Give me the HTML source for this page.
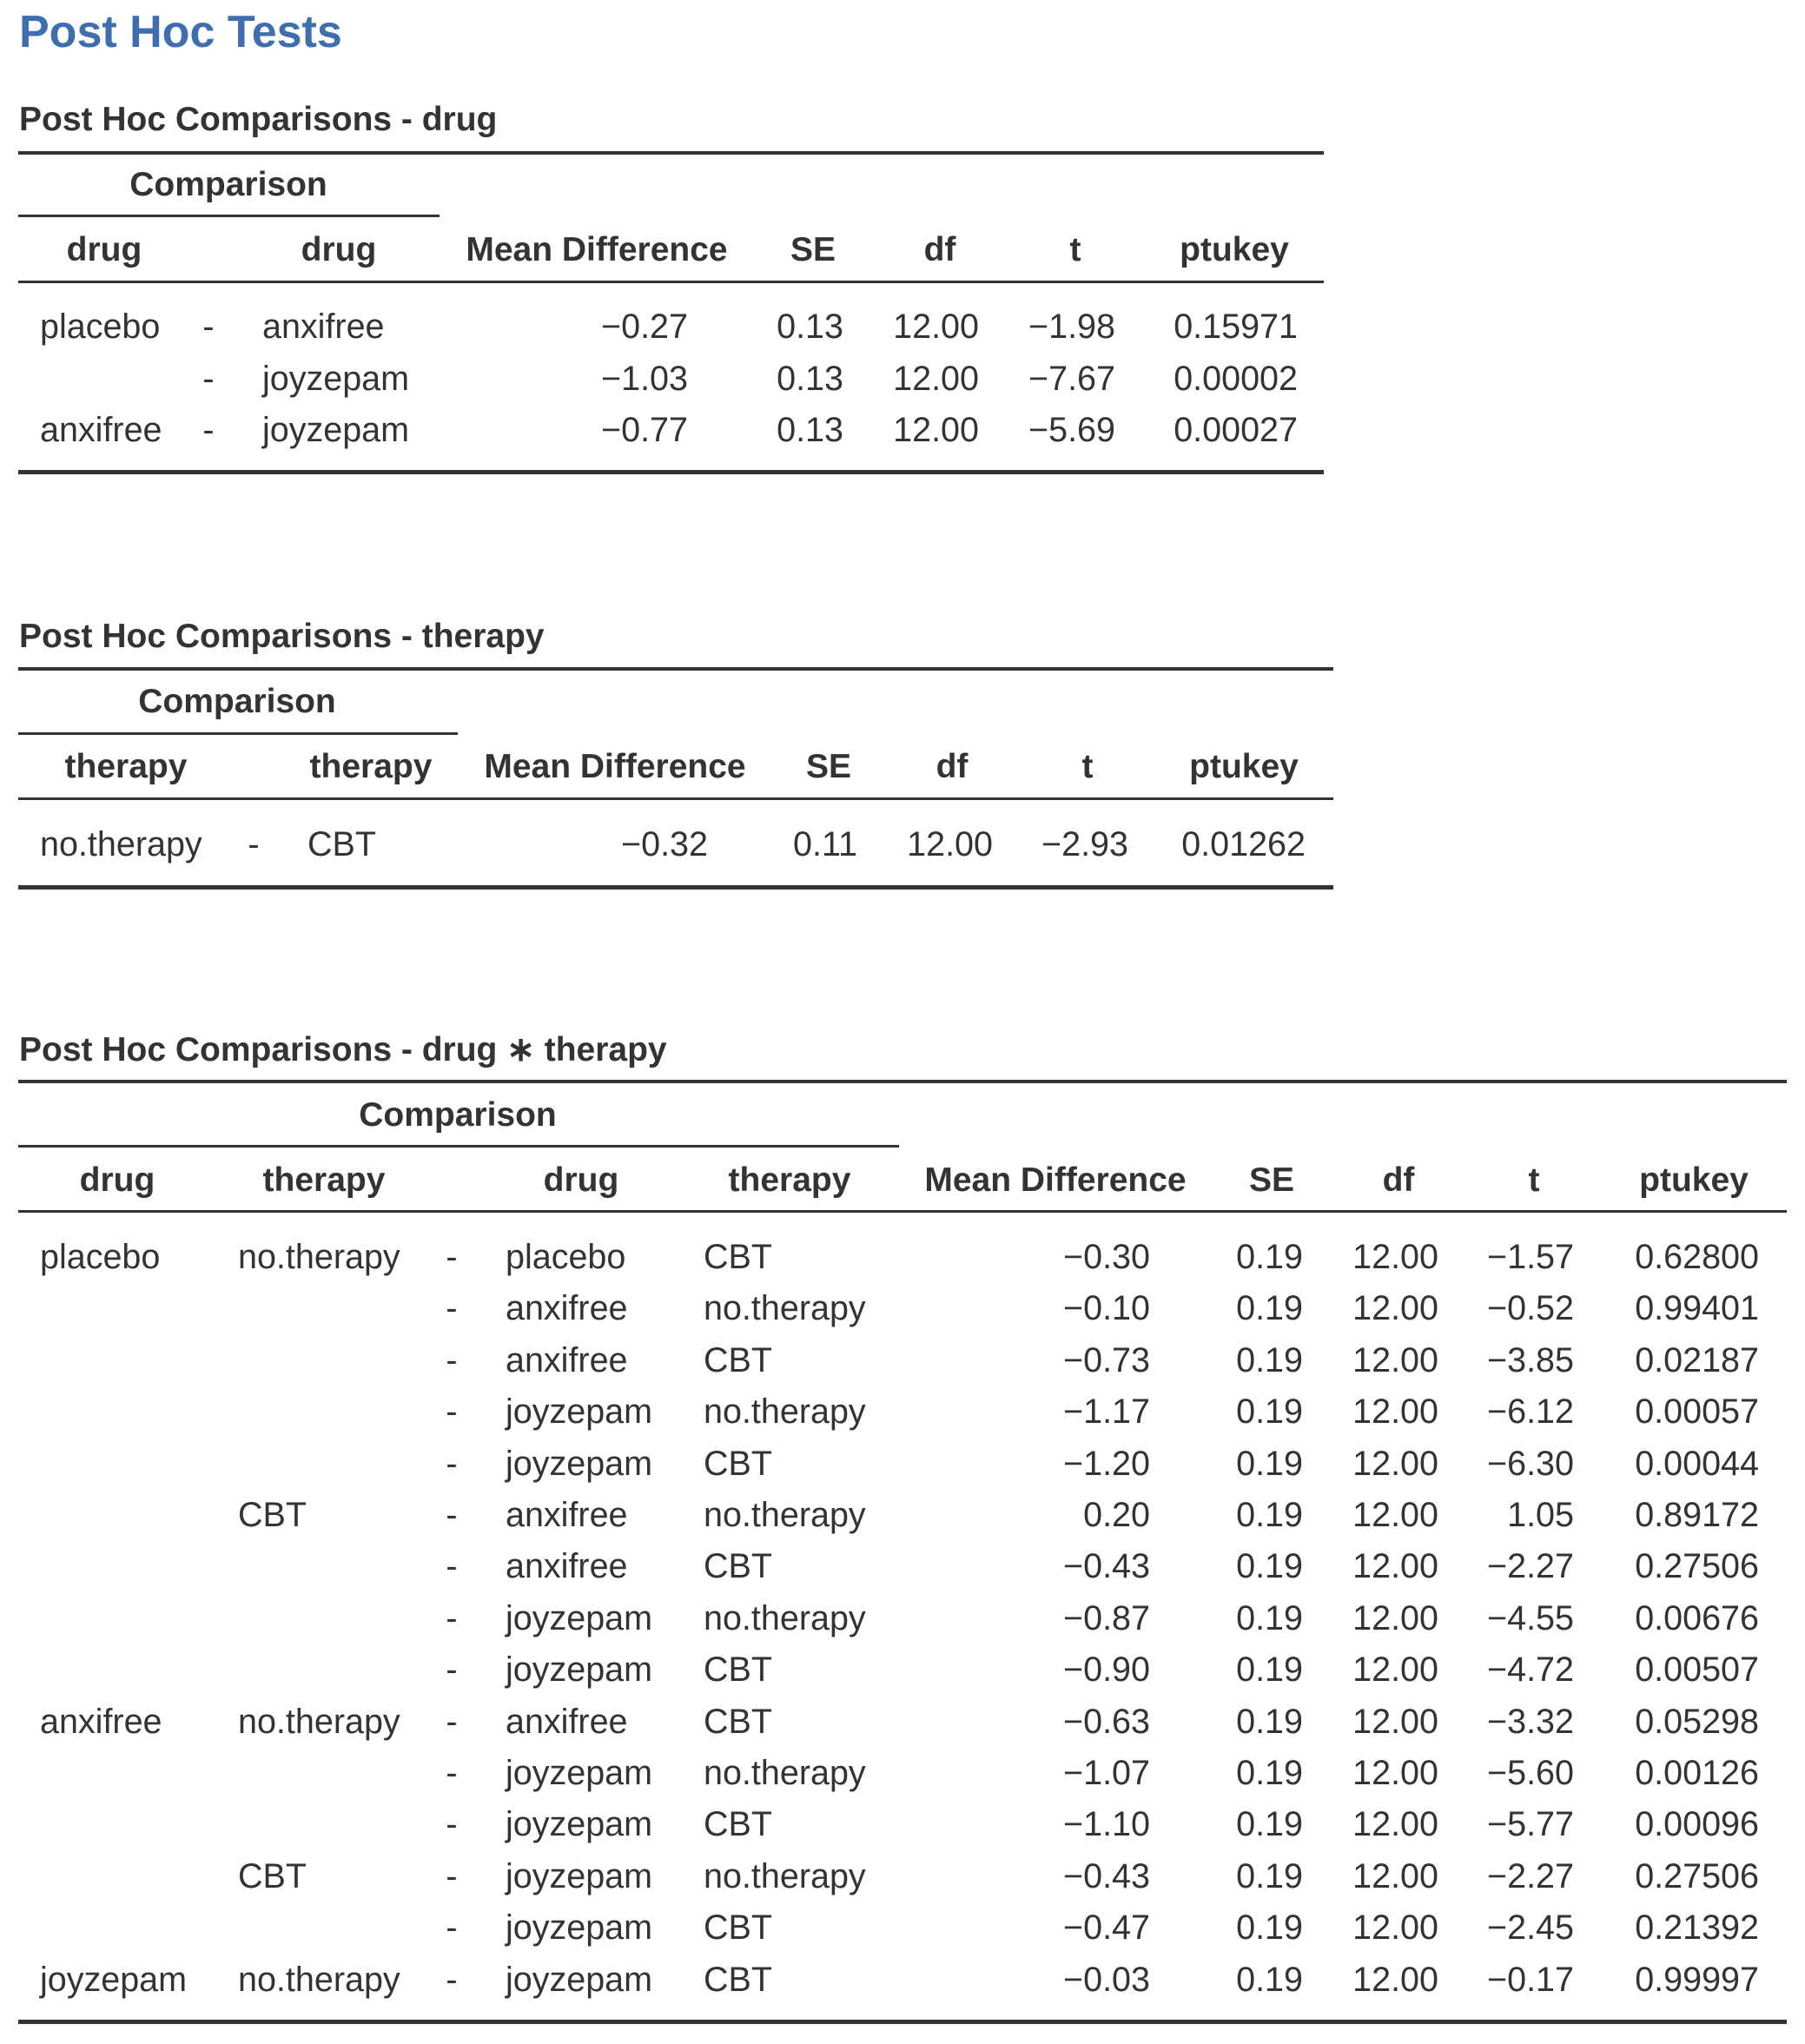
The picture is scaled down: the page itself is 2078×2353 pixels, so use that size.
<!DOCTYPE html>
<html><head><meta charset="utf-8"><style>
body{margin:0;background:#fff;width:2078px;height:2353px;position:relative;overflow:hidden;font-family:"Liberation Sans",sans-serif;color:#333;}
.row{position:absolute;left:0;width:2078px;height:50px;}
.row span{position:absolute;top:0;height:50px;line-height:50px;white-space:nowrap;font-size:39.5px;}
.b span{font-weight:bold;font-size:39px;}
.m{width:500px;text-align:center;}
.r{text-align:right;}
.h{position:absolute;background:#333;left:21px;}
.tt{position:absolute;left:22px;font-weight:bold;font-size:39px;white-space:nowrap;height:50px;line-height:50px;}
</style></head><body>
<div style="position:absolute;left:22px;top:7px;font-size:52px;font-weight:bold;color:#3e6eae;line-height:60px;">Post Hoc Tests</div>

<!-- Table 1 -->
<div class="tt" style="top:113px">Post Hoc Comparisons - drug</div>
<div class="h" style="top:174px;width:1503px;height:4px"></div>
<div class="row b" style="top:188px"><span class="m" style="left:13px">Comparison</span></div>
<div class="h" style="top:247px;width:485px;height:3px"></div>
<div class="row b" style="top:263px"><span class="m" style="left:-130px">drug</span><span class="m" style="left:140px">drug</span><span class="m" style="left:437px">Mean Difference</span><span class="m" style="left:686px">SE</span><span class="m" style="left:832px">df</span><span class="m" style="left:988px">t</span><span class="m" style="left:1171px">ptukey</span></div>
<div class="h" style="top:323px;width:1503px;height:3px"></div>
<div class="row" style="top:351px"><span style="left:46px">placebo</span><span class="m" style="left:-10px">-</span><span style="left:302px">anxifree</span><span class="r" style="right:1286px">−0.27</span><span class="r" style="right:1107px">0.13</span><span class="r" style="right:951px">12.00</span><span class="r" style="right:794px">−1.98</span><span class="r" style="right:584px">0.15971</span></div>
<div class="row" style="top:411px"><span class="m" style="left:-10px">-</span><span style="left:302px">joyzepam</span><span class="r" style="right:1286px">−1.03</span><span class="r" style="right:1107px">0.13</span><span class="r" style="right:951px">12.00</span><span class="r" style="right:794px">−7.67</span><span class="r" style="right:584px">0.00002</span></div>
<div class="row" style="top:470px"><span style="left:46px">anxifree</span><span class="m" style="left:-10px">-</span><span style="left:302px">joyzepam</span><span class="r" style="right:1286px">−0.77</span><span class="r" style="right:1107px">0.13</span><span class="r" style="right:951px">12.00</span><span class="r" style="right:794px">−5.69</span><span class="r" style="right:584px">0.00027</span></div>
<div class="h" style="top:541px;width:1503px;height:5px"></div>

<!-- Table 2 -->
<div class="tt" style="top:708px">Post Hoc Comparisons - therapy</div>
<div class="h" style="top:768px;width:1514px;height:4px"></div>
<div class="row b" style="top:783px"><span class="m" style="left:23px">Comparison</span></div>
<div class="h" style="top:843px;width:506px;height:3px"></div>
<div class="row b" style="top:858px"><span class="m" style="left:-105px">therapy</span><span class="m" style="left:177px">therapy</span><span class="m" style="left:458px">Mean Difference</span><span class="m" style="left:704px">SE</span><span class="m" style="left:846px">df</span><span class="m" style="left:1002px">t</span><span class="m" style="left:1182px">ptukey</span></div>
<div class="h" style="top:918px;width:1514px;height:3px"></div>
<div class="row" style="top:947px"><span style="left:46px">no.therapy</span><span class="m" style="left:42px">-</span><span style="left:354px">CBT</span><span class="r" style="right:1263px">−0.32</span><span class="r" style="right:1091px">0.11</span><span class="r" style="right:935px">12.00</span><span class="r" style="right:779px">−2.93</span><span class="r" style="right:575px">0.01262</span></div>
<div class="h" style="top:1019px;width:1514px;height:5px"></div>

<!-- Table 3 -->
<div class="tt" style="top:1184px">Post Hoc Comparisons - drug ∗ therapy</div>
<div class="h" style="top:1243px;width:2036px;height:4px"></div>
<div class="row b" style="top:1259px"><span class="m" style="left:277px">Comparison</span></div>
<div class="h" style="top:1318px;width:1014px;height:3px"></div>
<div class="row b" style="top:1334px"><span class="m" style="left:-115px">drug</span><span class="m" style="left:123px">therapy</span><span class="m" style="left:419px">drug</span><span class="m" style="left:659px">therapy</span><span class="m" style="left:965px">Mean Difference</span><span class="m" style="left:1214px">SE</span><span class="m" style="left:1360px">df</span><span class="m" style="left:1516px">t</span><span class="m" style="left:1700px">ptukey</span></div>
<div class="h" style="top:1393px;width:2036px;height:3px"></div>

<div class="row" style="top:1422px"><span style="left:46px">placebo</span><span style="left:274px">no.therapy</span><span class="m" style="left:270px">-</span><span style="left:582px">placebo</span><span style="left:810px">CBT</span><span class="r" style="right:754px">−0.30</span><span class="r" style="right:578px">0.19</span><span class="r" style="right:422px">12.00</span><span class="r" style="right:266px">−1.57</span><span class="r" style="right:53px">0.62800</span></div>
<div class="row" style="top:1481px"><span class="m" style="left:270px">-</span><span style="left:582px">anxifree</span><span style="left:810px">no.therapy</span><span class="r" style="right:754px">−0.10</span><span class="r" style="right:578px">0.19</span><span class="r" style="right:422px">12.00</span><span class="r" style="right:266px">−0.52</span><span class="r" style="right:53px">0.99401</span></div>
<div class="row" style="top:1541px"><span class="m" style="left:270px">-</span><span style="left:582px">anxifree</span><span style="left:810px">CBT</span><span class="r" style="right:754px">−0.73</span><span class="r" style="right:578px">0.19</span><span class="r" style="right:422px">12.00</span><span class="r" style="right:266px">−3.85</span><span class="r" style="right:53px">0.02187</span></div>
<div class="row" style="top:1600px"><span class="m" style="left:270px">-</span><span style="left:582px">joyzepam</span><span style="left:810px">no.therapy</span><span class="r" style="right:754px">−1.17</span><span class="r" style="right:578px">0.19</span><span class="r" style="right:422px">12.00</span><span class="r" style="right:266px">−6.12</span><span class="r" style="right:53px">0.00057</span></div>
<div class="row" style="top:1660px"><span class="m" style="left:270px">-</span><span style="left:582px">joyzepam</span><span style="left:810px">CBT</span><span class="r" style="right:754px">−1.20</span><span class="r" style="right:578px">0.19</span><span class="r" style="right:422px">12.00</span><span class="r" style="right:266px">−6.30</span><span class="r" style="right:53px">0.00044</span></div>
<div class="row" style="top:1719px"><span style="left:274px">CBT</span><span class="m" style="left:270px">-</span><span style="left:582px">anxifree</span><span style="left:810px">no.therapy</span><span class="r" style="right:754px">0.20</span><span class="r" style="right:578px">0.19</span><span class="r" style="right:422px">12.00</span><span class="r" style="right:266px">1.05</span><span class="r" style="right:53px">0.89172</span></div>
<div class="row" style="top:1778px"><span class="m" style="left:270px">-</span><span style="left:582px">anxifree</span><span style="left:810px">CBT</span><span class="r" style="right:754px">−0.43</span><span class="r" style="right:578px">0.19</span><span class="r" style="right:422px">12.00</span><span class="r" style="right:266px">−2.27</span><span class="r" style="right:53px">0.27506</span></div>
<div class="row" style="top:1838px"><span class="m" style="left:270px">-</span><span style="left:582px">joyzepam</span><span style="left:810px">no.therapy</span><span class="r" style="right:754px">−0.87</span><span class="r" style="right:578px">0.19</span><span class="r" style="right:422px">12.00</span><span class="r" style="right:266px">−4.55</span><span class="r" style="right:53px">0.00676</span></div>
<div class="row" style="top:1897px"><span class="m" style="left:270px">-</span><span style="left:582px">joyzepam</span><span style="left:810px">CBT</span><span class="r" style="right:754px">−0.90</span><span class="r" style="right:578px">0.19</span><span class="r" style="right:422px">12.00</span><span class="r" style="right:266px">−4.72</span><span class="r" style="right:53px">0.00507</span></div>
<div class="row" style="top:1957px"><span style="left:46px">anxifree</span><span style="left:274px">no.therapy</span><span class="m" style="left:270px">-</span><span style="left:582px">anxifree</span><span style="left:810px">CBT</span><span class="r" style="right:754px">−0.63</span><span class="r" style="right:578px">0.19</span><span class="r" style="right:422px">12.00</span><span class="r" style="right:266px">−3.32</span><span class="r" style="right:53px">0.05298</span></div>
<div class="row" style="top:2016px"><span class="m" style="left:270px">-</span><span style="left:582px">joyzepam</span><span style="left:810px">no.therapy</span><span class="r" style="right:754px">−1.07</span><span class="r" style="right:578px">0.19</span><span class="r" style="right:422px">12.00</span><span class="r" style="right:266px">−5.60</span><span class="r" style="right:53px">0.00126</span></div>
<div class="row" style="top:2075px"><span class="m" style="left:270px">-</span><span style="left:582px">joyzepam</span><span style="left:810px">CBT</span><span class="r" style="right:754px">−1.10</span><span class="r" style="right:578px">0.19</span><span class="r" style="right:422px">12.00</span><span class="r" style="right:266px">−5.77</span><span class="r" style="right:53px">0.00096</span></div>
<div class="row" style="top:2135px"><span style="left:274px">CBT</span><span class="m" style="left:270px">-</span><span style="left:582px">joyzepam</span><span style="left:810px">no.therapy</span><span class="r" style="right:754px">−0.43</span><span class="r" style="right:578px">0.19</span><span class="r" style="right:422px">12.00</span><span class="r" style="right:266px">−2.27</span><span class="r" style="right:53px">0.27506</span></div>
<div class="row" style="top:2194px"><span class="m" style="left:270px">-</span><span style="left:582px">joyzepam</span><span style="left:810px">CBT</span><span class="r" style="right:754px">−0.47</span><span class="r" style="right:578px">0.19</span><span class="r" style="right:422px">12.00</span><span class="r" style="right:266px">−2.45</span><span class="r" style="right:53px">0.21392</span></div>
<div class="row" style="top:2254px"><span style="left:46px">joyzepam</span><span style="left:274px">no.therapy</span><span class="m" style="left:270px">-</span><span style="left:582px">joyzepam</span><span style="left:810px">CBT</span><span class="r" style="right:754px">−0.03</span><span class="r" style="right:578px">0.19</span><span class="r" style="right:422px">12.00</span><span class="r" style="right:266px">−0.17</span><span class="r" style="right:53px">0.99997</span></div>
<div class="h" style="top:2325px;width:2036px;height:5px"></div>
</body></html>
